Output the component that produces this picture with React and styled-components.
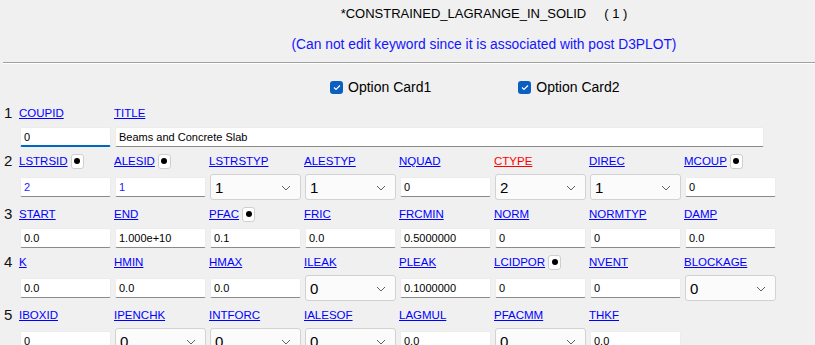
import styled, { createGlobalStyle } from 'styled-components';

const GlobalStyle = createGlobalStyle`
  html, body {
    margin: 0;
    padding: 0;
    background: #f0f0f0;
    overflow: hidden;
  }
  body {
    font-family: "Liberation Sans", Arial, sans-serif;
    height: 345px;
  }
`;

const cards = [
  {
    no: 1,
    fields: [
      { label: 'COUPID', value: '0', focused: true },
      { label: 'TITLE', value: 'Beams and Concrete Slab', wide: true },
    ],
  },
  {
    no: 2,
    tall: true,
    fields: [
      { label: 'LSTRSID', value: '2', dot: true, blue: true },
      { label: 'ALESID', value: '1', dot: true, blue: true },
      { label: 'LSTRSTYP', value: '1', select: true },
      { label: 'ALESTYP', value: '1', select: true },
      { label: 'NQUAD', value: '0' },
      { label: 'CTYPE', value: '2', select: true, red: true },
      { label: 'DIREC', value: '1', select: true },
      { label: 'MCOUP', value: '0', dot: true },
    ],
  },
  {
    no: 3,
    fields: [
      { label: 'START', value: '0.0' },
      { label: 'END', value: '1.000e+10' },
      { label: 'PFAC', value: '0.1', dot: true },
      { label: 'FRIC', value: '0.0' },
      { label: 'FRCMIN', value: '0.5000000' },
      { label: 'NORM', value: '0' },
      { label: 'NORMTYP', value: '0' },
      { label: 'DAMP', value: '0.0' },
    ],
  },
  {
    no: 4,
    tall: true,
    fields: [
      { label: 'K', value: '0.0' },
      { label: 'HMIN', value: '0.0' },
      { label: 'HMAX', value: '0.0' },
      { label: 'ILEAK', value: '0', select: true },
      { label: 'PLEAK', value: '0.1000000' },
      { label: 'LCIDPOR', value: '0', dot: true },
      { label: 'NVENT', value: '0' },
      { label: 'BLOCKAGE', value: '0', select: true },
    ],
  },
  {
    no: 5,
    tall: true,
    fields: [
      { label: 'IBOXID', value: '0' },
      { label: 'IPENCHK', value: '0', select: true },
      { label: 'INTFORC', value: '0', select: true },
      { label: 'IALESOF', value: '0', select: true },
      { label: 'LAGMUL', value: '0.0' },
      { label: 'PFACMM', value: '0', select: true },
      { label: 'THKF', value: '0.0' },
    ],
  },
];

function Chevron() {
  return (
    <svg width="10" height="6" viewBox="0 0 10 6">
      <polyline points="1,1 5,5 9,1" fill="none" stroke="#606060" strokeWidth="1" />
    </svg>
  );
}

function CheckIcon() {
  return (
    <svg width="8" height="7" viewBox="0 0 8 7">
      <polyline points="1,3.5 3,5.5 7,1.5" fill="none" stroke="#fff" strokeWidth="1.2" />
    </svg>
  );
}

function App() {
  return (
    <>
      <GlobalStyle />
      <Page>
        <Header>
          <Title>
            *CONSTRAINED_LAGRANGE_IN_SOLID<Count>( 1 )</Count>
          </Title>
          <Notice>(Can not edit keyword since it is associated with post D3PLOT)</Notice>
        </Header>
        <Separator />

        <OptionRow>
          <Option>
            <CheckBox>
              <CheckIcon />
            </CheckBox>
            Option Card1
          </Option>
          <Option>
            <CheckBox>
              <CheckIcon />
            </CheckBox>
            Option Card2
          </Option>
        </OptionRow>

        {cards.map((card) => (
          <Card key={card.no} $tall={card.tall}>
            <RowNo>{card.no}</RowNo>
            {card.fields.map((f) => (
              <LabelCell key={f.label + 'l'}>
                <Label $red={f.red}>{f.label}</Label>
                {f.dot && (
                  <DotButton>
                    <span />
                  </DotButton>
                )}
              </LabelCell>
            ))}
            <RowSpacer />
            {card.fields.map((f) =>
              f.select ? (
                <Select key={f.label + 'f'}>
                  <span>{f.value}</span>
                  <Chevron />
                </Select>
              ) : (
                <Input
                  key={f.label + 'f'}
                  $wide={f.wide}
                  $focused={f.focused}
                  $blue={f.blue}
                >
                  {f.value}
                </Input>
              )
            )}
          </Card>
        ))}
      </Page>
    </>
  );
}

export default App;

const Page = styled.div`
  width: 815px;
  height: 345px;
  overflow: hidden;
`;

const Header = styled.div`
  width: 968px;
  padding-top: 5px;
  text-align: center;
`;

const Title = styled.div`
  font-size: 13px;
  line-height: 17px;
  color: #000;
`;

const Count = styled.span`
  margin-left: 18px;
`;

const Notice = styled.div`
  margin-top: 14px;
  font-size: 13.8px;
  line-height: 17px;
  color: #1414ff;
`;

const Separator = styled.div`
  margin: 9px 0 0 3px;
  border-top: 1px solid #a0a0a0;
  border-bottom: 1px solid #ffffff;
`;

const OptionRow = styled.div`
  display: flex;
  gap: 87px;
  height: 24px;
  align-items: center;
  margin-top: 11px;
  margin-bottom: 6px;
  padding-left: 330px;
`;

const Option = styled.label`
  display: flex;
  align-items: center;
  gap: 5px;
  font-size: 14px;
  color: #000;
`;

const CheckBox = styled.span`
  width: 13px;
  height: 13px;
  border-radius: 3px;
  background: #0a5fc0;
  display: flex;
  align-items: center;
  justify-content: center;
`;

const Card = styled.div`
  display: grid;
  grid-template-columns: 12px repeat(8, 91px);
  grid-template-rows: 16px ${(p) => (p.$tall ? '26px' : '20px')};
  column-gap: 4px;
  row-gap: ${(p) => (p.$tall ? '5px' : '6px')};
  align-items: center;
  justify-items: start;
  padding-left: 4px;
  margin-bottom: 6px;
`;

const RowNo = styled.div`
  grid-row: 1;
  grid-column: 1;
  font-size: 15px;
  line-height: 16px;
  color: #111;
`;

const RowSpacer = styled.span`
  grid-row: 2;
  grid-column: 1;
`;

const LabelCell = styled.div`
  grid-row: 1;
  display: flex;
  align-items: center;
  height: 16px;
  margin-left: -1px;
`;

const Label = styled.span`
  font-size: 11.5px;
  color: ${(p) => (p.$red ? '#ff0000' : '#0000ff')};
  text-decoration: underline;
`;

const DotButton = styled.span`
  margin-left: 3px;
  width: 13px;
  height: 15px;
  box-sizing: border-box;
  border: 1px solid #cfcfcf;
  border-radius: 3px;
  background: #fff;
  display: flex;
  align-items: center;
  justify-content: center;

  span {
    width: 6px;
    height: 6px;
    border-radius: 50%;
    background: #000;
  }
`;

const Input = styled.div`
  grid-row: 2;
  grid-column: ${(p) => (p.$wide ? 'span 7' : 'auto')};
  box-sizing: border-box;
  height: 20px;
  width: ${(p) => (p.$wide ? '649px' : '91px')};
  background: #fff;
  border: 1px solid #ececec;
  border-bottom: ${(p) => (p.$focused ? '2px solid #0067c0' : '1px solid #8a8a8a')};
  border-radius: 2px;
  padding-left: 3px;
  font-size: 11px;
  line-height: 18px;
  color: ${(p) => (p.$blue ? '#1a1aff' : '#000')};
  white-space: nowrap;
  overflow: hidden;
`;

const Select = styled.div`
  grid-row: 2;
  box-sizing: border-box;
  height: 26px;
  width: 91px;
  background: #fbfbfb;
  border: 1px solid #d2d2d2;
  border-radius: 3px;
  display: flex;
  align-items: center;
  justify-content: space-between;
  padding: 1px 9px 0 4px;
  font-size: 15px;
  color: #000;
`;
